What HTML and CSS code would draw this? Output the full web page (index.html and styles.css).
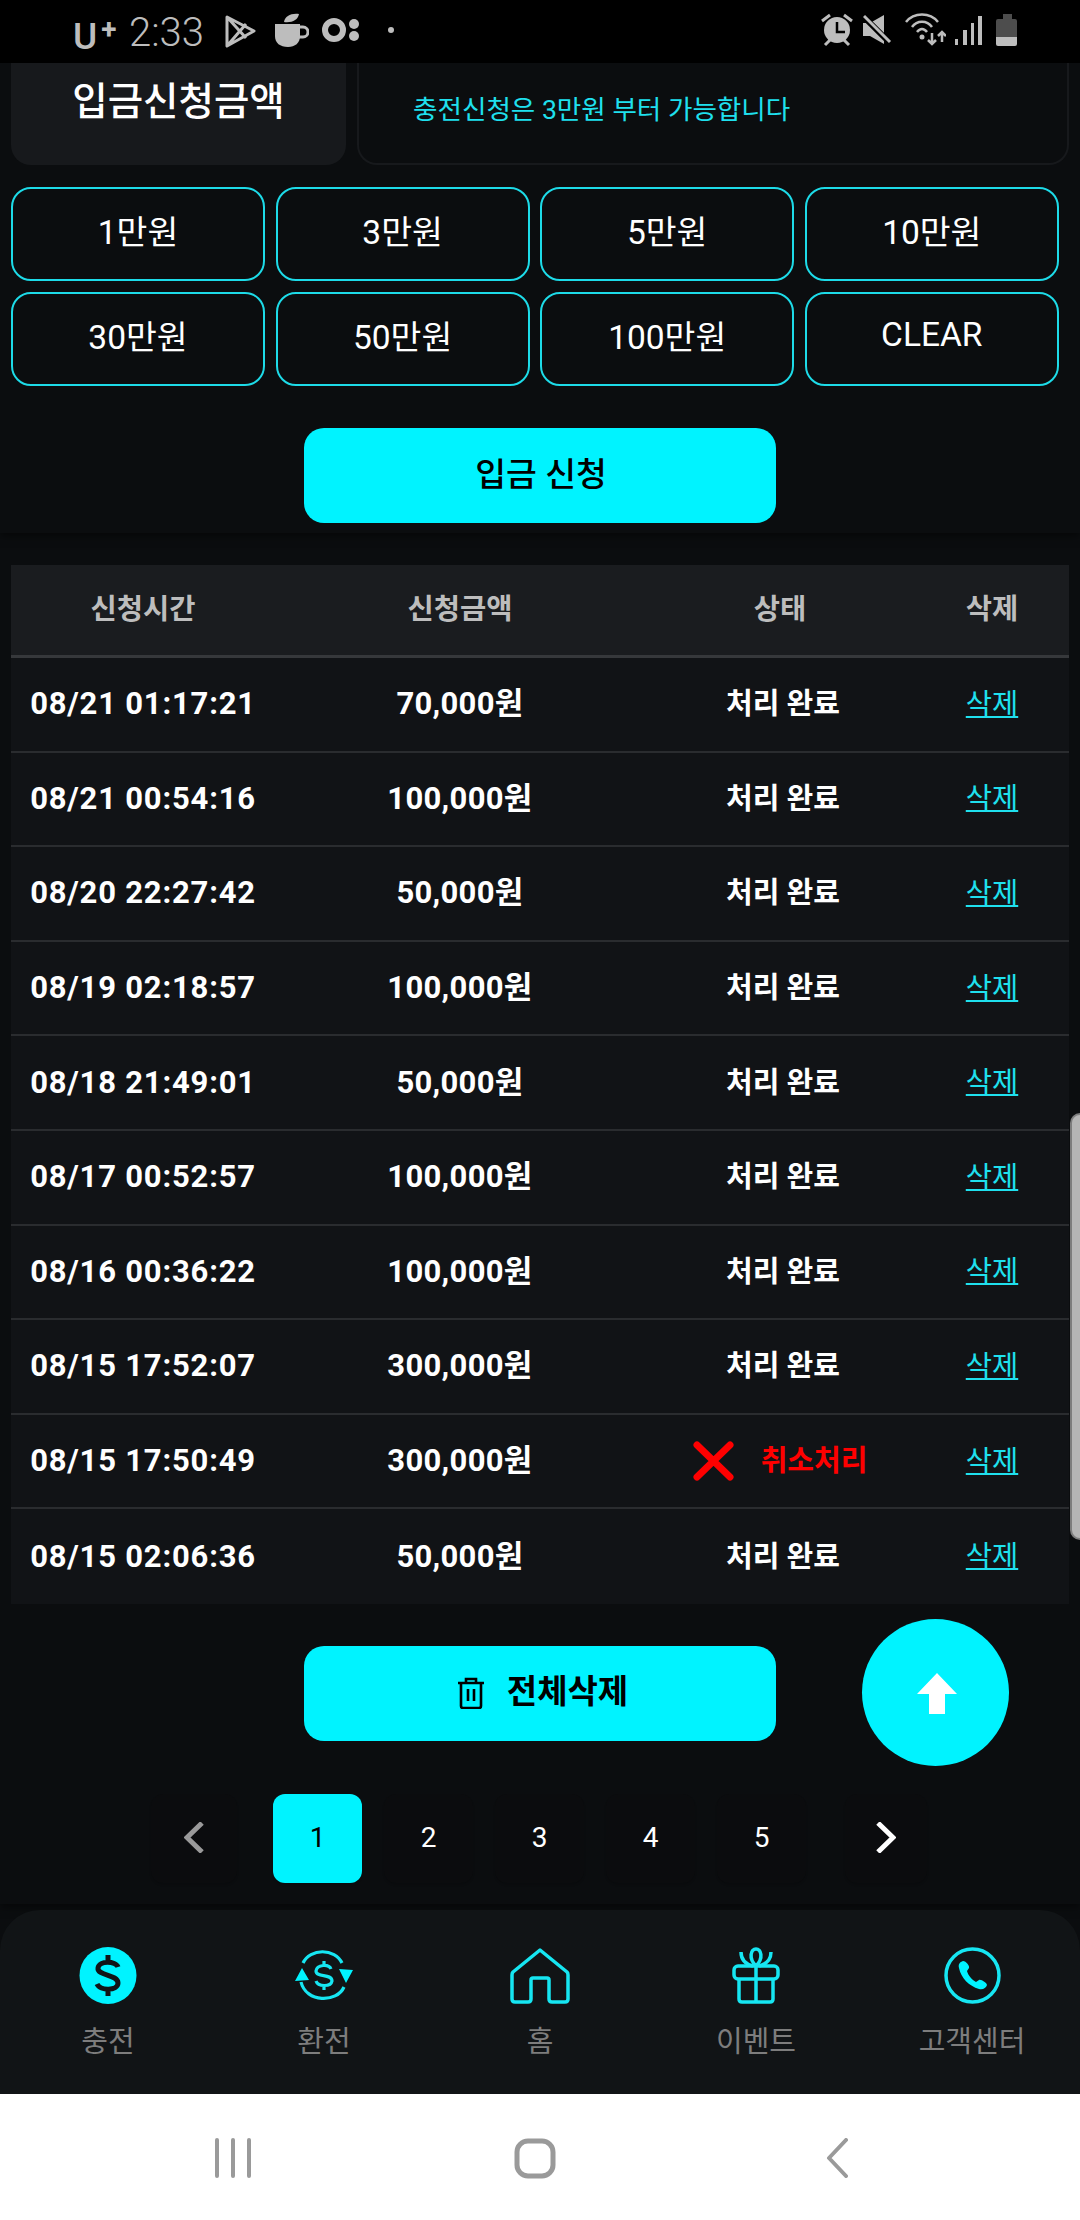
FILE: index.html
```html
<!DOCTYPE html>
<html lang="ko">
<head>
	<meta charset="utf-8"/>
	<title>입금신청</title>
	<link rel="stylesheet" href="styles.css">
</head>

<body>

<div class="statusbar">
	<div class="status_left">
		<span class="carrier">U<span class="plus">+</span></span>
		<span class="clock">2:33</span>
		<svg class="s_play" width="31" height="63" viewBox="0 0 31 63"><path d="M2 17 L29 31 L2 46 Z M2 17 L21 38 M2 46 L21 24" fill="none" stroke="#bdbdbd" stroke-width="3" stroke-linejoin="round"/></svg>
		<svg class="s_cup" width="34" height="63" viewBox="0 0 34 63"><path d="M0 24 H25 V36 C25 43 20 47 13 47 C5 47 0 43 0 36 Z" fill="#bdbdbd"/><path d="M24 27 H28 A4.500 4.500 0 0 1 28 37 H23" fill="none" stroke="#bdbdbd" stroke-width="3"/><path d="M9 22 C10 16 16 13 24 14 C23 20 17 23 9 22 Z" fill="#bdbdbd"/></svg>
		<svg class="s_dots" width="38" height="63" viewBox="0 0 38 63"><circle cx="12" cy="30" r="9" fill="none" stroke="#bdbdbd" stroke-width="6"/><circle cx="32" cy="24" r="5" fill="#bdbdbd"/><circle cx="32" cy="36" r="5" fill="#bdbdbd"/></svg>
		<svg class="s_dot" width="6" height="63" viewBox="0 0 6 63"><circle cx="3" cy="30" r="3" fill="#bdbdbd"/></svg>
	</div>
	<div class="status_right">
		<svg width="32" height="63" viewBox="0 0 32 63"><circle cx="16" cy="30" r="13" fill="#bdbdbd"/><path d="M16 22 V32 H24" fill="none" stroke="#000" stroke-width="2.500"/><path d="M1 21 L9 15 M31 21 L23 15 M4 45 L9 40 M28 45 L23 40" stroke="#bdbdbd" stroke-width="3"/></svg>
		<svg class="s_mute" width="29" height="63" viewBox="0 0 29 63"><path d="M0 23 H7 L21 15 V44 L7 36 H0 Z" fill="#bdbdbd"/><path d="M1 17 L27 43" stroke="#000" stroke-width="6"/><path d="M1 16 L27 42" stroke="#bdbdbd" stroke-width="3"/></svg>
		<svg class="s_wifi" width="41" height="63" viewBox="0 0 41 63"><g fill="none" stroke="#bdbdbd" stroke-width="2.500"><path d="M1 22 C9 12 25 12 33 22"/><path d="M7 27 C12 20 22 20 27 27"/><path d="M12 32 C15 28 19 28 22 32"/></g><circle cx="17" cy="37" r="2.500" fill="#bdbdbd"/><path d="M27 33 V44 M23 40 L27 44 L31 40 M37 42 V33 M33 36 L37 32 L41 36" fill="none" stroke="#bdbdbd" stroke-width="2.500"/></svg>
		<svg class="s_signal" width="27" height="63" viewBox="0 0 27 63"><path d="M0 39 H3 V45 H0 Z M8 30 H12 V45 H8 Z M16 23 H19 V45 H16 Z M23 16 H27 V45 H23 Z" fill="#bdbdbd"/></svg>
		<svg class="s_batt" width="21" height="63" viewBox="0 0 21 63"><path d="M7 14 H16 V19 H19 Q21 19 21 21 V37 H0 V21 Q0 19 2 19 H7 Z" fill="#4d4d4d"/><path d="M0 37 H21 V44 Q21 46 19 46 H2 Q0 46 0 44 Z" fill="#bdbdbd"/></svg>
	</div>
</div>

<main class="panel">
	<div class="top_row">
		<div class="amount_label">입금신청금액</div>
		<div class="notice">충전신청은 3만원 부터 가능합니다</div>
	</div>

	<div class="amounts">
		<button class="amount">1만원</button>
		<button class="amount">3만원</button>
		<button class="amount">5만원</button>
		<button class="amount">10만원</button>
		<button class="amount">30만원</button>
		<button class="amount">50만원</button>
		<button class="amount">100만원</button>
		<button class="amount">CLEAR</button>
	</div>

	<button class="main_btn apply">입금 신청</button>
</main>

<section class="history">
	<div class="list">
		<div class="row head">
			<div>신청시간</div><div>신청금액</div><div>상태</div><div>삭제</div>
		</div>
		<div class="row"><div class="num">08/21 01:17:21</div><div class="num">70,000원</div><div class="done">처리 완료</div><div><a class="del">삭제</a></div></div>
		<div class="row"><div class="num">08/21 00:54:16</div><div class="num">100,000원</div><div class="done">처리 완료</div><div><a class="del">삭제</a></div></div>
		<div class="row"><div class="num">08/20 22:27:42</div><div class="num">50,000원</div><div class="done">처리 완료</div><div><a class="del">삭제</a></div></div>
		<div class="row"><div class="num">08/19 02:18:57</div><div class="num">100,000원</div><div class="done">처리 완료</div><div><a class="del">삭제</a></div></div>
		<div class="row"><div class="num">08/18 21:49:01</div><div class="num">50,000원</div><div class="done">처리 완료</div><div><a class="del">삭제</a></div></div>
		<div class="row"><div class="num">08/17 00:52:57</div><div class="num">100,000원</div><div class="done">처리 완료</div><div><a class="del">삭제</a></div></div>
		<div class="row"><div class="num">08/16 00:36:22</div><div class="num">100,000원</div><div class="done">처리 완료</div><div><a class="del">삭제</a></div></div>
		<div class="row"><div class="num">08/15 17:52:07</div><div class="num">300,000원</div><div class="done">처리 완료</div><div><a class="del">삭제</a></div></div>
		<div class="row">
			<div class="num">08/15 17:50:49</div><div class="num">300,000원</div>
			<div class="cancelled">
				<svg width="41" height="40" viewBox="0 0 41 40"><path d="M4 4 L37 36 M37 4 L4 36" stroke="#f00" stroke-width="7" stroke-linecap="round"/></svg>
				<span>취소처리</span>
			</div>
			<div><a class="del">삭제</a></div>
		</div>
		<div class="row"><div class="num">08/15 02:06:36</div><div class="num">50,000원</div><div class="done">처리 완료</div><div><a class="del">삭제</a></div></div>
	</div>

	<button class="main_btn del_all">
		<svg width="28" height="32" viewBox="0 0 28 32"><path d="M1 6 H27 M9 6 V2 H19 V6 M4 6 V29 Q4 31 6 31 H22 Q24 31 24 29 V6 M11 12 V24 M17 12 V24" fill="none" stroke="#000" stroke-width="2.600"/></svg>
		<span>전체삭제</span>
	</button>

	<div class="pager">
		<a class="page prev"><svg width="20" height="31" viewBox="0 0 20 31"><path d="M18 1 L3 15.500 L18 30" fill="none" stroke="#9a9a9a" stroke-width="5"/></svg></a>
		<a class="page on">1</a>
		<a class="page">2</a>
		<a class="page">3</a>
		<a class="page">4</a>
		<a class="page">5</a>
		<a class="page next"><svg width="20" height="31" viewBox="0 0 20 31"><path d="M2 1 L17 15.500 L2 30" fill="none" stroke="#fff" stroke-width="5"/></svg></a>
	</div>
</section>

<nav class="tabs">
	<div class="tab">
		<svg width="58" height="57" viewBox="0 0 58 57"><circle cx="29" cy="28.500" r="28.500" fill="#00f3ff"/><path d="M39 20 C37 14 20 13 19 21 C18 29 39 27 39 36 C39 44 21 44 18 37 M29 8 V14 M29 43 V49" fill="none" stroke="#111417" stroke-width="5"/></svg>
		<span>충전</span>
	</div>
	<div class="tab">
		<svg width="58" height="57" viewBox="0 0 58 57"><g fill="none" stroke="#16e6f2" stroke-width="3.200"><path d="M8 16 C15 1 40 1 47 16"/><path d="M6 35 C11 56 42 56 49 40"/><path d="M36 22 C34 17 22 17 21 24 C21 31 37 26 37 34 C36 40 23 40 21 34 M29 14 V18 M29 39 V43"/></g><path d="M0 34 L14 33 L7 21 Z M44 22 L58 23 L51 36 Z" fill="#00f3ff"/></svg>
		<span>환전</span>
	</div>
	<div class="tab">
		<svg width="60" height="57" viewBox="0 0 60 57"><path d="M30 3 L57 25 Q58 26 58 28 V52 Q58 55 55 55 H42 Q39 55 39 52 V33 Q39 31 37 31 H23 Q21 31 21 33 V52 Q21 55 18 55 H5 Q2 55 2 52 V28 Q2 26 3 25 Z" fill="none" stroke="#16e6f2" stroke-width="3.500" stroke-linejoin="round"/></svg>
		<span>홈</span>
	</div>
	<div class="tab">
		<svg width="48" height="57" viewBox="0 0 48 57"><g fill="none" stroke="#16e6f2" stroke-width="3.500"><rect x="2" y="19" width="44" height="13" rx="4"/><path d="M7 32 V52 Q7 55 10 55 H38 Q41 55 41 52 V32 M24 19 V55"/><path d="M24 19 C16 11 19 2 24 2 C29 2 32 11 24 19 Z"/><path d="M9 5 C9 12 13 17 21 19 M39 5 C39 12 35 17 27 19"/></g></svg>
		<span>이벤트</span>
	</div>
	<div class="tab">
		<svg width="57" height="57" viewBox="0 0 57 57"><circle cx="28.500" cy="28.500" r="26.500" fill="none" stroke="#16e6f2" stroke-width="3.500"/><path d="M19 14 C16 15 14 17 15 21 C17 31 25 39 35 42 C39 43 42 41 43 38 C43 36 37 32 35 33 L32 35 C28 33 24 28 23 24 L25 21 C26 19 22 14 19 14 Z" fill="#00f3ff"/></svg>
		<span>고객센터</span>
	</div>
</nav>

<div class="softkeys">
	<svg width="36" height="40" viewBox="0 0 36 40"><path d="M2 2 V38 M18 2 V38 M34 2 V38" stroke="#9a9a9a" stroke-width="4" stroke-linecap="round"/></svg>
	<svg width="42" height="41" viewBox="0 0 42 41"><rect x="3" y="3" width="36" height="35" rx="11" fill="none" stroke="#9a9a9a" stroke-width="5"/></svg>
	<svg class="key_back" width="22" height="40" viewBox="0 0 22 40"><path d="M20 2 L3 20 L20 38" fill="none" stroke="#9a9a9a" stroke-width="4" stroke-linecap="round" stroke-linejoin="round"/></svg>
</div>

<button class="to_top">
	<svg width="40" height="41" viewBox="0 0 40 41"><path d="M20 0 L40 21 H28 V41 H12 V21 H0 Z" fill="#fff"/></svg>
</button>
<div class="scroll_thumb"></div>

</body>
</html>
```

FILE: styles.css
```css
body {
	margin: 0;
	width: 1080px;
	height: 2220px;
	position: relative;
	overflow: hidden;
	background: #0b0d0f;
	color: #fff;
	font-family: Roboto, "Noto Sans CJK KR", sans-serif;
}
button {
	font-family: inherit;
	padding: 0;
	border: 0;
}

/* status bar */
.statusbar {
	height: 63px;
	background: #000;
	display: flex;
	justify-content: space-between;
	color: #bdbdbd;
}
.status_left {
	display: flex;
	padding-left: 73px;
}
.status_right {
	display: flex;
	padding-right: 63px;
}
.s_mute { margin-left: 10px; }
.s_wifi { margin-left: 13px; }
.s_signal { margin-left: 9px; }
.s_batt { margin-left: 14px; }
.carrier {
	width: 56px;
	font-size: 37px;
	font-weight: 500;
	line-height: 60px;
}
.plus {
	font-size: 28px;
	font-weight: 700;
	vertical-align: 10px;
	margin-left: 4px;
}
.clock {
	font-size: 40px;
	font-weight: 300;
	line-height: 66px;
}
.s_play { margin-left: 21px; }
.s_cup { margin-left: 19px; }
.s_dots { margin-left: 13px; }
.s_dot { margin-left: 28px; }

/* top panel */
.panel {
	height: 470px;
	background: #0b0d0f;
	box-shadow: 0 3px 8px rgba(0, 0, 0, 0.5);
	position: relative;
}
.top_row {
	display: flex;
	gap: 11px;
	padding: 0 11px;
}
.amount_label {
	width: 335px;
	height: 102px;
	padding-top: 1px;
	box-sizing: border-box;
	background: #17191c;
	border-radius: 0 0 20px 20px;
	font-size: 38.500px;
	font-weight: 500;
	line-height: 76px;
	text-align: center;
}
.notice {
	flex: 1;
	height: 102px;
	box-sizing: border-box;
	padding: 28px 0 0 54px;
	border: 2px solid #17191c;
	border-top: 0;
	border-radius: 0 0 20px 20px;
	color: #1fe0ee;
	font-size: 26.600px;
	line-height: 38px;
}
.amounts {
	display: grid;
	grid-template-columns: repeat(4, 254px);
	gap: 11px 10.6px;
	margin: 22px 0 0 11px;
}
.amount {
	height: 94px;
	padding-bottom: 10px;
	background: transparent;
	border: 2px solid #1ddbe8;
	border-radius: 20px;
	color: #fff;
	font-size: 33.500px;
}
.main_btn {
	display: flex;
	align-items: center;
	justify-content: center;
	width: 472px;
	height: 95px;
	background: #00f3ff;
	border-radius: 20px;
	color: #000;
	font-size: 33.500px;
}
.apply {
	margin: 42px 0 0 304px;
	padding: 0 0 9px 2px;
	font-weight: 500;
}

/* history list */
.history {
	height: 1371px;
	padding-top: 32px;
	box-sizing: border-box;
	box-shadow: 0 3px 8px rgba(0, 0, 0, 0.5);
}
.list {
	margin: 0 11px;
	background: #111316;
}
.row {
	display: grid;
	grid-template-columns: 264px 370px 270px 154px;
	align-items: center;
	height: 94.6px;
	box-sizing: border-box;
	border-bottom: 2px solid #2a2c2f;
	text-align: center;
	font-size: 29px;
	font-weight: 700;
	line-height: 40px;
}
.row:last-child {
	border-bottom: 0;
}
.head {
	height: 93px;
	background: #1a1c1f;
	border-bottom: 3px solid #36383b;
	color: #bdbdbd;
	font-size: 28.500px;
}
.num {
	font-size: 31px;
	letter-spacing: 0.3px;
}
.num:first-child {
	letter-spacing: 0.8px;
}
.done {
	padding-left: 6px;
}
.del {
	color: #1fe0ee;
	font-size: 28.500px;
	font-weight: 400;
	text-decoration: underline;
}
.cancelled {
	display: flex;
	align-items: center;
	justify-content: center;
	gap: 27px;
	color: #f00;
}
.del_all {
	margin: 42px 0 0 304px;
	padding-left: 5px;
	gap: 22px;
	font-size: 33px;
	font-weight: 700;
}
.del_all span {
	padding-bottom: 8px;
}
.pager {
	display: flex;
	justify-content: center;
	gap: 22px;
	margin-top: 53px;
	padding-right: 2px;
}
.page {
	display: flex;
	align-items: center;
	justify-content: center;
	width: 89px;
	height: 89px;
	padding-bottom: 2px;
	box-sizing: border-box;
	background: #0b0c0e;
	border-radius: 12px;
	box-shadow: 0 2px 2px rgba(0, 0, 0, 0.12);
	font-size: 28px;
}
.page.on {
	background: #00f3ff;
	color: #000;
}
.prev {
	width: 86px;
	margin-right: 14px;
}
.next {
	width: 82px;
	margin-left: 17px;
}

/* bottom tabs */
.tabs {
	display: flex;
	height: 184px;
	margin-top: 6px;
	padding-top: 37px;
	box-sizing: border-box;
	background: #111416;
	border-radius: 40px 40px 0 0;
}
.tab {
	flex: 1;
	display: flex;
	flex-direction: column;
	align-items: center;
	color: #7d7d7d;
	font-size: 29px;
	line-height: 36px;
}
.tab span {
	margin-top: 20px;
}

/* android keys */
.softkeys {
	height: 126px;
	padding-top: 2px;
	box-sizing: border-box;
	background: #fff;
	display: flex;
	align-items: center;
	padding-left: 215px;
	gap: 263px;
}
.key_back {
	margin-left: 7px;
}

/* floating stuff */
.to_top {
	position: absolute;
	left: 862px;
	top: 1619px;
	width: 147px;
	height: 147px;
	border-radius: 50%;
	background: #00f3ff;
	display: flex;
	align-items: center;
	justify-content: center;
	padding-left: 2px;
	padding-top: 2px;
}
.scroll_thumb {
	position: absolute;
	left: 1070px;
	top: 1113px;
	width: 10px;
	height: 427px;
	box-sizing: border-box;
	background: #b5b5b5;
	border: 2px solid #7d7d7d;
	border-right: 0;
	border-radius: 14px 0 0 14px;
}
```
